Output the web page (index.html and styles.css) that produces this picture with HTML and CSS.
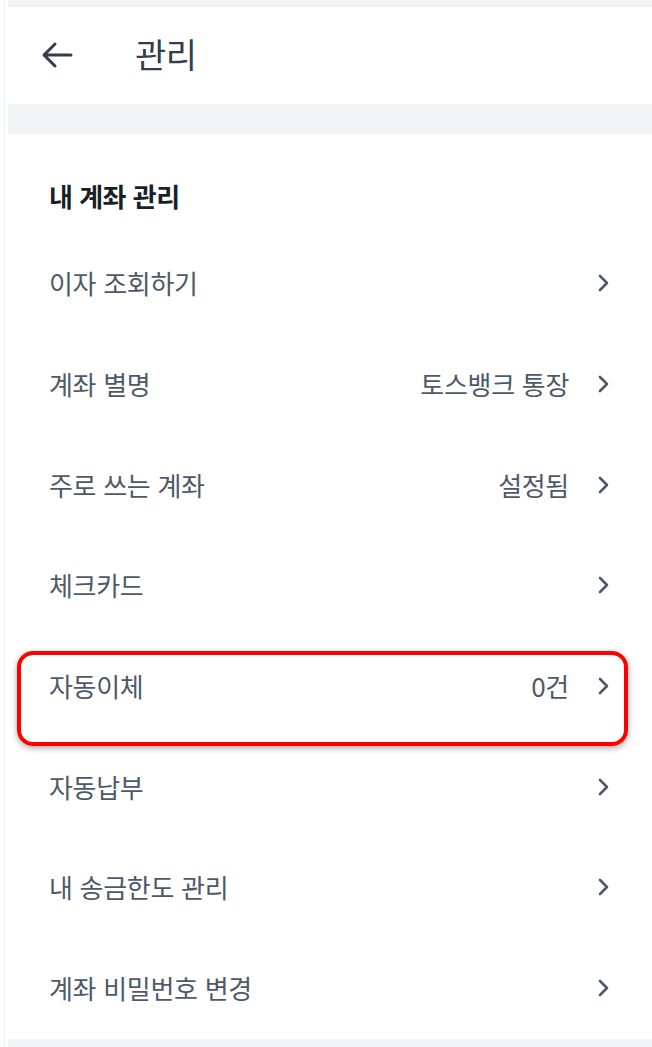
FILE: index.html
```html
<!DOCTYPE html>
<html lang="ko">
<head>
<meta charset="utf-8">
<link rel="stylesheet" href="styles.css">
</head>
<body>
<div class="page">
  <div class="statusbar"></div>
  <header class="header">
    <svg class="back" width="32" height="28" viewBox="0 0 32 28"><path d="M30 14H4M14 3L3 14l11 11" fill="none" stroke="#333d4b" stroke-width="3" stroke-linecap="round" stroke-linejoin="round"/></svg>
    <h1 class="title">관리</h1>
  </header>
  <div class="band"></div>
  <section class="section">
    <h2 class="heading">내 계좌 관리</h2>
    <ul class="list">
      <li class="row"><span class="label">이자 조회하기</span><span class="right"><svg class="chev" width="14" height="20" viewBox="0 0 14 20"><path d="M3 3l7 7-7 7" fill="none" stroke="#4e5968" stroke-width="2.6" stroke-linecap="round" stroke-linejoin="round"/></svg></span></li>
      <li class="row"><span class="label">계좌 별명</span><span class="right"><span class="value">토스뱅크 통장</span><svg class="chev" width="14" height="20" viewBox="0 0 14 20"><path d="M3 3l7 7-7 7" fill="none" stroke="#4e5968" stroke-width="2.6" stroke-linecap="round" stroke-linejoin="round"/></svg></span></li>
      <li class="row"><span class="label">주로 쓰는 계좌</span><span class="right"><span class="value">설정됨</span><svg class="chev" width="14" height="20" viewBox="0 0 14 20"><path d="M3 3l7 7-7 7" fill="none" stroke="#4e5968" stroke-width="2.6" stroke-linecap="round" stroke-linejoin="round"/></svg></span></li>
      <li class="row"><span class="label">체크카드</span><span class="right"><svg class="chev" width="14" height="20" viewBox="0 0 14 20"><path d="M3 3l7 7-7 7" fill="none" stroke="#4e5968" stroke-width="2.6" stroke-linecap="round" stroke-linejoin="round"/></svg></span></li>
      <li class="row highlighted"><span class="label">자동이체</span><span class="right"><span class="value">0건</span><svg class="chev" width="14" height="20" viewBox="0 0 14 20"><path d="M3 3l7 7-7 7" fill="none" stroke="#4e5968" stroke-width="2.6" stroke-linecap="round" stroke-linejoin="round"/></svg></span><span class="mark"></span></li>
      <li class="row"><span class="label">자동납부</span><span class="right"><svg class="chev" width="14" height="20" viewBox="0 0 14 20"><path d="M3 3l7 7-7 7" fill="none" stroke="#4e5968" stroke-width="2.6" stroke-linecap="round" stroke-linejoin="round"/></svg></span></li>
      <li class="row"><span class="label">내 송금한도 관리</span><span class="right"><svg class="chev" width="14" height="20" viewBox="0 0 14 20"><path d="M3 3l7 7-7 7" fill="none" stroke="#4e5968" stroke-width="2.6" stroke-linecap="round" stroke-linejoin="round"/></svg></span></li>
      <li class="row"><span class="label">계좌 비밀번호 변경</span><span class="right"><svg class="chev" width="14" height="20" viewBox="0 0 14 20"><path d="M3 3l7 7-7 7" fill="none" stroke="#4e5968" stroke-width="2.6" stroke-linecap="round" stroke-linejoin="round"/></svg></span></li>
    </ul>
  </section>
  <div class="band bottom"></div>
</div>
</body>
</html>
```
FILE: styles.css
```css
* { box-sizing: border-box; margin: 0; padding: 0; }
html, body { background: #fff; }
body {
  font-family: "Noto Sans CJK KR", "Noto Sans", sans-serif;
  width: 652px;
  height: 1047px;
  overflow: hidden;
}
.page {
  margin-left: 4px;
  border-left: 1px solid #eef0f2;
  height: 1047px;
  display: flex;
  flex-direction: column;
}
.statusbar {
  height: 7px;
  background: #f2f3f5;
  margin-left: 3px;
}
.header {
  height: 97px;
  display: flex;
  align-items: center;
  padding-left: 36px;
}
.back { display: block; margin-top: -2px; }
.title {
  margin-left: 62px;
  font-size: 34px;
  font-weight: 400;
  color: #333d4b;
  line-height: 1;
  letter-spacing: -0.5px;
  margin-top: -4px;
}
.band {
  height: 30px;
  background: #f2f4f6;
  margin-left: 3px;
}
.band.bottom { flex: 1; }
.section {
  padding-top: 46px;
}
.heading {
  padding-left: 44px;
  font-size: 26px;
  font-weight: 700;
  color: #191f28;
  line-height: 32px;
  letter-spacing: -0.5px;
}
.list {
  list-style: none;
  margin-top: 21px;
}
.row {
  position: relative;
  height: 100.7px;
  display: flex;
  align-items: center;
  justify-content: space-between;
  padding-left: 44px;
  padding-right: 41px;
}
.label {
  font-size: 26px;
  color: #4e5968;
  letter-spacing: -0.3px;
  margin-top: -1px;
}
.right {
  display: flex;
  align-items: center;
}
.value {
  font-size: 26px;
  color: #4e5968;
  margin-right: 28px;
  letter-spacing: -0.3px;
  margin-top: -1px;
}
.chev { display: block; margin-top: 0; }
.mark {
  position: absolute;
  left: 12px;
  right: 24px;
  top: 15px;
  bottom: -9.5px;
  border: 4.5px solid #ff0000;
  border-radius: 16px;
  box-shadow: 0 2px 6px rgba(0,0,0,0.35);
  pointer-events: none;
}
```
